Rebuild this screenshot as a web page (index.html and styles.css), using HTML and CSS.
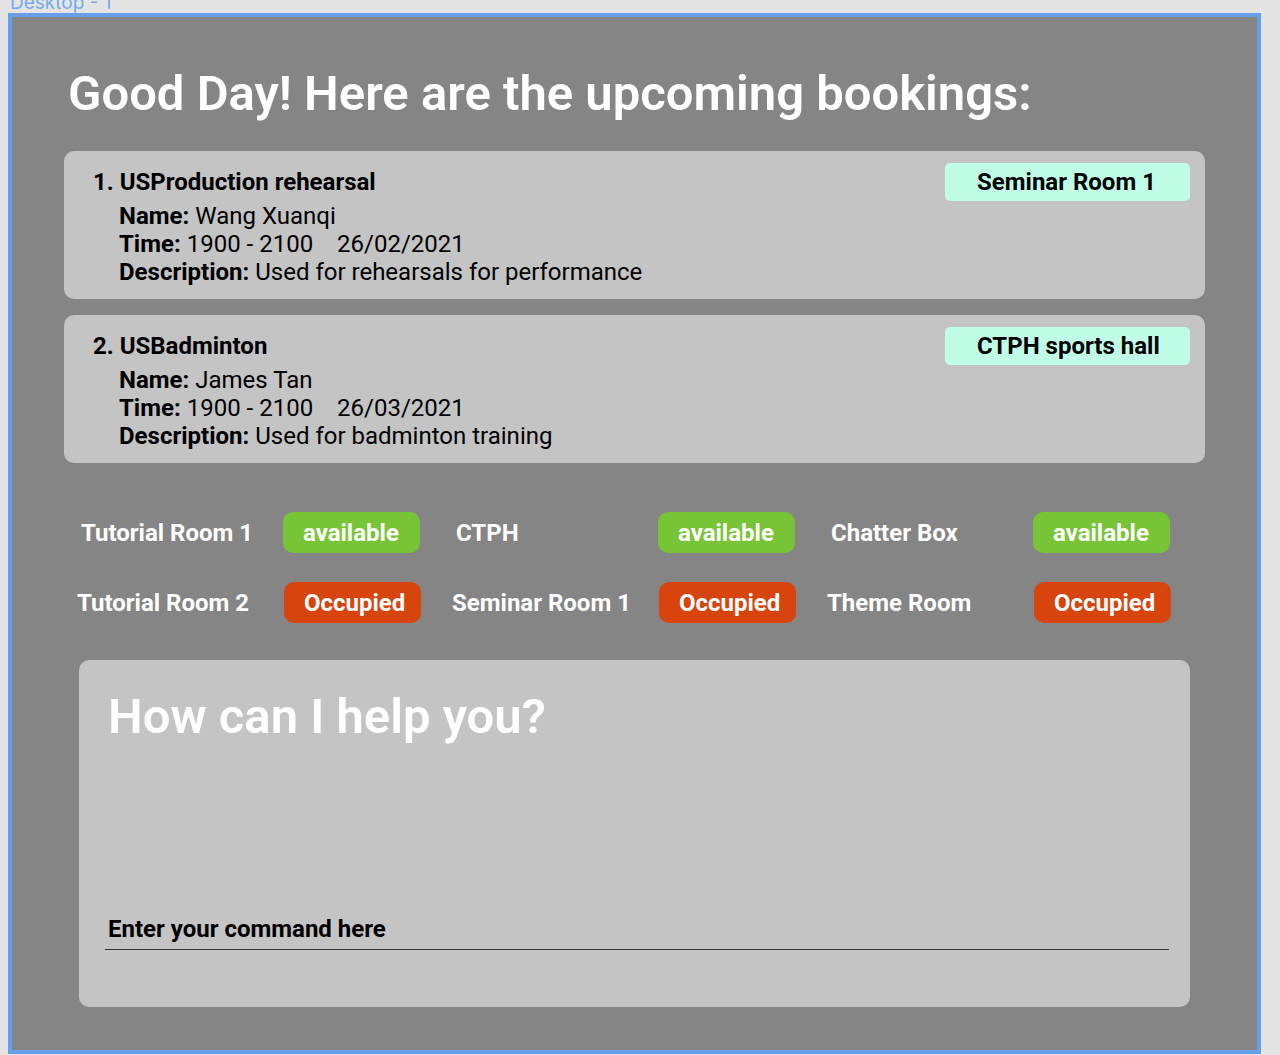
FILE: index.html
```html
<!DOCTYPE html>
<html lang="en">
<head>
<meta charset="utf-8">
<meta name="viewport" content="width=device-width, initial-scale=1">
<title>Room bookings</title>
<link rel="stylesheet" href="styles.css">
</head>
<body>
<div class="frame-label"><span>Desktop - 1</span></div>
<main class="frame">
  <h1 class="heading">Good Day! Here are the upcoming bookings:</h1>

  <section class="bookings" aria-label="Upcoming bookings">
    <article class="booking">
      <div class="booking-info">
        <h2 class="booking-title">1. USProduction rehearsal</h2>
        <div class="booking-details">
          <p><b>Name:</b> Wang Xuanqi</p>
          <p><b>Time:</b> 1900 - 2100 <span class="date">26/02/2021</span></p>
          <p><b>Description:</b> Used for rehearsals for performance</p>
        </div>
      </div>
      <span class="venue">Seminar Room 1</span>
    </article>
    <article class="booking">
      <div class="booking-info">
        <h2 class="booking-title">2. USBadminton</h2>
        <div class="booking-details">
          <p><b>Name:</b> James Tan</p>
          <p><b>Time:</b> 1900 - 2100 <span class="date">26/03/2021</span></p>
          <p><b>Description:</b> Used for badminton training</p>
        </div>
      </div>
      <span class="venue">CTPH sports hall</span>
    </article>
  </section>

  <section class="rooms" aria-label="Room status">
    <ul class="room-row room-row-available">
      <li class="room">Tutorial Room 1 <span class="status available">available</span></li>
      <li class="room">CTPH <span class="status available">available</span></li>
      <li class="room">Chatter Box <span class="status available">available</span></li>
    </ul>
    <ul class="room-row room-row-occupied">
      <li class="room">Tutorial Room 2 <span class="status occupied">Occupied</span></li>
      <li class="room">Seminar Room 1 <span class="status occupied">Occupied</span></li>
      <li class="room">Theme Room <span class="status occupied">Occupied</span></li>
    </ul>
  </section>

  <form class="assistant">
    <label class="question" for="command">How can I help you?</label>
    <input class="command" id="command" type="text" placeholder="Enter your command here" autocomplete="off">
  </form>
</main>
</body>
</html>
```
FILE: styles.css
```css
* {
  box-sizing: border-box;
}

body {
  margin: 0;
  padding-right: 19px;
  padding-left: 8px;
  background: #e4e4e4;
  color: #000;
  font: 400 24px/28px Roboto, "Liberation Sans", sans-serif;
}

h1, h2, p, ul {
  margin: 0;
  padding: 0;
}

b {
  font-weight: 700;
}

/* Canvas label, scrolled partly out of view */
.frame-label {
  display: flex;
  align-items: flex-end;
  height: 13px;
  padding-left: 2px;
  color: #78a9ea;
  font: 400 19px/20px Inter, sans-serif;
}

.frame {
  padding: 49px 52px 43px;
  border: 4px solid #689feb;
  background: #858585;
}

.heading,
.question {
  color: #fff;
  font-size: 49px;
  font-weight: 600;
  line-height: 56px;
}

.heading {
  padding-left: 4px;
}

.bookings {
  display: grid;
  gap: 16px;
  margin-top: 29px;
}

.booking {
  display: flex;
  justify-content: space-between;
  align-items: flex-start;
  padding: 12px 15px 13px 29px;
  border-radius: 10px;
  background: #c4c4c4;
}

.booking-info {
  padding-top: 5px;
}

.booking-title {
  font-size: 24px;
  font-weight: 700;
  line-height: 28px;
}

.booking-details {
  margin-top: 6px;
  padding-left: 26px;
}

.date {
  margin-left: 18px;
}

.venue {
  flex: none;
  width: 245px;
  padding: 5px 0 5px 32px;
  border-radius: 5px;
  background: #c0fde6;
  font-weight: 700;
}

.rooms {
  display: grid;
  gap: 29px;
  margin-top: 49px;
}

.room-row {
  display: grid;
  grid-template-columns: repeat(3, 1fr);
  list-style: none;
}

.room-row-available {
  gap: 36px;
  padding: 0 35px 0 17px;
}

.room-row-occupied {
  gap: 31px;
  padding: 0 34px 0 13px;
}

.room {
  display: flex;
  justify-content: space-between;
  align-items: center;
  color: #fff;
  font-weight: 700;
}

.status {
  width: 137px;
  padding: 7px 0 6px 20px;
  border-radius: 10px;
}

.available {
  background: #77c536;
}

.occupied {
  background: #d8440d;
}

.assistant {
  display: flex;
  flex-direction: column;
  margin: 37px 15px 0;
  padding: 29px 21px 57px 26px;
  border-radius: 10px;
  background: #c4c4c4;
}

.question {
  padding-left: 3px;
}

.command {
  margin-top: 163px;
  padding: 4px 3px 3px;
  border: 0;
  border-bottom: 1px solid #333;
  border-radius: 0;
  outline: 0;
  background: transparent;
  color: #000;
  font: 700 24px/34px Roboto, "Liberation Sans", sans-serif;
}

.command::placeholder {
  color: #000;
  opacity: 1;
}
```
